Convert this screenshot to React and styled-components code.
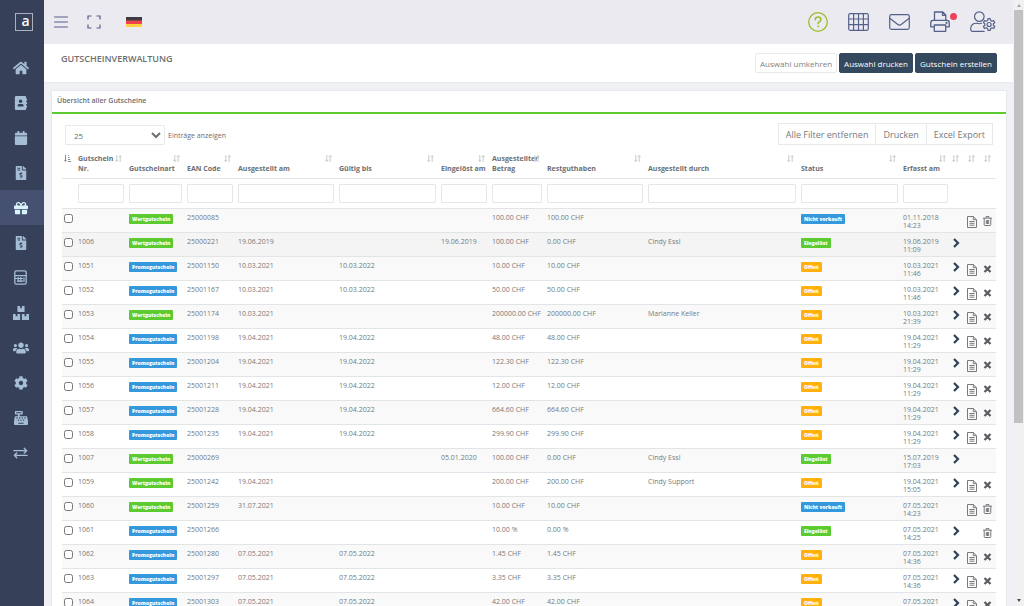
import React from 'react'
import styled, { createGlobalStyle } from 'styled-components'
import {
  FaHome,
  FaAddressBook,
  FaCalendar,
  FaFileInvoiceDollar,
  FaGift,
  FaBoxes,
  FaUsers,
  FaCog,
  FaCashRegister,
} from 'react-icons/fa'

const columns = [
  { label: '', width: 14 },
  { label: 'Gutschein Nr.', width: 51, filter: true },
  { label: 'Gutscheinart', width: 58, filter: true },
  { label: 'EAN Code', width: 51, filter: true },
  { label: 'Ausgestellt am', width: 101, filter: true },
  { label: 'Gültig bis', width: 102, filter: true },
  { label: 'Eingelöst am', width: 51, filter: true },
  { label: 'Ausgestellter Betrag', width: 55, filter: true },
  { label: 'Restguthaben', width: 101, filter: true },
  { label: 'Ausgestellt durch', filter: true },
  { label: 'Status', width: 102, filter: true },
  { label: 'Erfasst am', width: 50, filter: true },
  { label: '', width: 13 },
  { label: '', width: 16 },
  { label: '', width: 16 },
]

// nr, type, ean, issued, valid until, redeemed, amount, rest, issued by, status, date, time, actions
const rows = [
  ['', 'W', '25000085', '', '', '', '100.00 CHF', '100.00 CHF', '', 'N', '01.11.2018', '14:23', 'dt'],
  ['1006', 'W', '25000221', '19.06.2019', '', '19.06.2019', '100.00 CHF', '0.00 CHF', 'Cindy Essl', 'E', '19.06.2019', '11:09', 'c'],
  ['1051', 'P', '25001150', '10.03.2021', '10.03.2022', '', '10.00 CHF', '10.00 CHF', '', 'O', '10.03.2021', '11:46', 'cdx'],
  ['1052', 'P', '25001167', '10.03.2021', '10.03.2022', '', '50.00 CHF', '50.00 CHF', '', 'O', '10.03.2021', '11:46', 'cdx'],
  ['1053', 'W', '25001174', '10.03.2021', '', '', '200000.00 CHF', '200000.00 CHF', 'Marianne Keller', 'O', '10.03.2021', '21:39', 'cdx'],
  ['1054', 'P', '25001198', '19.04.2021', '19.04.2022', '', '48.00 CHF', '48.00 CHF', '', 'O', '19.04.2021', '11:29', 'cdx'],
  ['1055', 'P', '25001204', '19.04.2021', '19.04.2022', '', '122.30 CHF', '122.30 CHF', '', 'O', '19.04.2021', '11:29', 'cdx'],
  ['1056', 'P', '25001211', '19.04.2021', '19.04.2022', '', '12.00 CHF', '12.00 CHF', '', 'O', '19.04.2021', '11:29', 'cdx'],
  ['1057', 'P', '25001228', '19.04.2021', '19.04.2022', '', '664.60 CHF', '664.60 CHF', '', 'O', '19.04.2021', '11:29', 'cdx'],
  ['1058', 'P', '25001235', '19.04.2021', '19.04.2022', '', '299.90 CHF', '299.90 CHF', '', 'O', '19.04.2021', '11:29', 'cdx'],
  ['1007', 'W', '25000269', '', '', '05.01.2020', '100.00 CHF', '0.00 CHF', 'Cindy Essl', 'E', '15.07.2019', '17:03', 'c'],
  ['1059', 'W', '25001242', '19.04.2021', '', '', '200.00 CHF', '200.00 CHF', 'Cindy Support', 'O', '19.04.2021', '15:05', 'cdx'],
  ['1060', 'W', '25001259', '31.07.2021', '', '', '10.00 CHF', '10.00 CHF', '', 'N', '07.05.2021', '14:23', 'dt'],
  ['1061', 'P', '25001266', '', '', '', '10.00 %', '0.00 %', '', 'E', '07.05.2021', '14:25', 'ct'],
  ['1062', 'P', '25001280', '07.05.2021', '07.05.2022', '', '1.45 CHF', '1.45 CHF', '', 'O', '07.05.2021', '14:36', 'cdx'],
  ['1063', 'P', '25001297', '07.05.2021', '07.05.2022', '', '3.35 CHF', '3.35 CHF', '', 'O', '07.05.2021', '14:36', 'cdx'],
  ['1064', 'P', '25001303', '07.05.2021', '07.05.2022', '', '42.00 CHF', '42.00 CHF', '', 'O', '07.05.2021', '14:36', 'cdx'],
]

const types = {
  W: { label: 'Wertgutschein', color: '#5bcb2f' },
  P: { label: 'Promogutschein', color: '#3598dc' },
}

const states = {
  N: { label: 'Nicht verkauft', color: '#3598dc' },
  E: { label: 'Eingelöst', color: '#5bcb2f' },
  O: { label: 'Offen', color: '#ffb20d' },
}

const CalculatorIcon = () => (
  <svg viewBox="0 0 13 15" width="13" height="15" fill="none" stroke="currentColor" strokeWidth="1.300">
    <rect x=".8" y=".8" width="11.400" height="13.400" rx="1.500" />
    <path d="M1 5.600h11M1 8.500h8M4.200 7v5M6.800 7v5M3 11.200h6M10 7.500v4.500" strokeWidth="1.200" />
  </svg>
)

const ExchangeIcon = () => (
  <svg viewBox="0 0 16 12" width="15" height="12" fill="none" stroke="currentColor" strokeWidth="1.5" strokeLinecap="round" strokeLinejoin="round">
    <path d="M1 3.5h13.5M12 1l2.5 2.5L12 6M15 8.5H1.5M4 6L1.5 8.5L4 11" />
  </svg>
)

const navItems = [
  { name: 'Start', icon: <FaHome size={16} /> },
  { name: 'Kontakte', icon: <FaAddressBook size={14} /> },
  { name: 'Kalender', icon: <FaCalendar size={14} /> },
  { name: 'Rechnungen', icon: <FaFileInvoiceDollar size={14} /> },
  { name: 'Gutscheine', icon: <FaGift size={14} />, active: true },
  { name: 'Belege', icon: <FaFileInvoiceDollar size={14} /> },
  { name: 'Rechner', icon: <CalculatorIcon /> },
  { name: 'Lager', icon: <FaBoxes size={16} /> },
  { name: 'Personal', icon: <FaUsers size={16} /> },
  { name: 'Einstellungen', icon: <FaCog size={14} /> },
  { name: 'Kasse', icon: <FaCashRegister size={14} /> },
  { name: 'Transfer', icon: <ExchangeIcon /> },
]

const MenuIcon = () => (
  <svg width="14" height="12" viewBox="0 0 14 12" stroke="currentColor" strokeWidth="1" strokeLinecap="round">
    <path d="M.5 1h13M.5 6h13M.5 11h13" />
  </svg>
)

const ExpandIcon = () => (
  <svg width="14" height="14" viewBox="0 0 14 14" fill="none" stroke="currentColor" strokeWidth="1.2">
    <path d="M1 4.5V1h3.5M9.500 1H13v3.500M13 9.500V13H9.500M4.500 13H1V9.500" />
  </svg>
)

const FlagIcon = () => (
  <svg width="16" height="10" viewBox="0 0 16 10">
    <rect width="16" height="4" fill="#3d3a42" />
    <rect y="3.500" width="16" height="3.500" fill="#f0444c" />
    <rect y="7" width="16" height="3" fill="#ffd13f" />
  </svg>
)

const HelpIcon = () => (
  <svg width="20" height="20" viewBox="0 0 20 20" fill="none" stroke="#9cbf2e" strokeLinecap="round">
    <circle cx="10" cy="10" r="9.300" strokeWidth="1.300" />
    <path d="M7.200 7.700C7.300 6 8.500 5 10.100 5c1.600 0 2.800 1 2.800 2.500 0 2.200-2.800 2.200-2.800 4.300" strokeWidth="1.500" />
    <circle cx="10.100" cy="14.400" r=".5" fill="#9cbf2e" />
  </svg>
)

const GridIcon = () => (
  <svg width="21" height="18" viewBox="0 0 21 18" fill="none" stroke="currentColor" strokeWidth="1.200">
    <rect x=".7" y=".7" width="19.600" height="16.600" rx="1.500" />
    <path d="M.7 6h19.600M.7 11.700h19.600M5.600.7v16.600M10.500.7v16.600M15.400.7v16.600" />
  </svg>
)

const MailIcon = () => (
  <svg width="21" height="16" viewBox="0 0 21 16" fill="none" stroke="currentColor" strokeWidth="1.200" strokeLinejoin="round">
    <rect x=".7" y=".7" width="19.600" height="14.600" rx="1.800" />
    <path d="M.8 4.300l7.700 6c1.300 1 2.700 1 4 0l7.700-6" />
  </svg>
)

const PrinterIcon = () => (
  <svg width="20" height="21" viewBox="0 0 20 21" fill="none" stroke="currentColor" strokeWidth="1.300" strokeLinejoin="round">
    <path d="M4.500 9.300V1h8.300l3 3v5.300M12.500 1v3.300h3.300" />
    <path d="M4.300 15.800H.8v-4.300c0-1.300.9-2.200 2.200-2.200h14c1.300 0 2.200.9 2.200 2.200v4.300h-3.500" />
    <path d="M4.300 14h11.400v6.300H4.300z" />
    <circle cx="16.500" cy="11.900" r=".4" fill="currentColor" />
  </svg>
)

const UserGearIcon = () => (
  <svg width="26" height="21" viewBox="0 0 26 21" fill="none" stroke="currentColor" strokeWidth="1.200" strokeLinejoin="round" strokeLinecap="round">
    <circle cx="9.300" cy="5.600" r="4.800" />
    <path d="M11.500 12.300c-1.600.6-3 .6-4.500 0C3.200 12 .7 14.200.7 17.500v1.100c0 1 .7 1.700 1.700 1.700h11.800" />
    <path d="M18 7.600h2.200l.4 1.800 1.300.8 1.800-.6 1.100 1.900-1.400 1.200v1.600l1.400 1.200-1.100 1.900-1.800-.6-1.300.8-.4 1.800H18l-.4-1.800-1.300-.8-1.800.6-1.100-1.900 1.400-1.200v-1.600l-1.400-1.200 1.100-1.900 1.800.6 1.300-.8z" />
    <circle cx="19.100" cy="13.500" r="2" />
  </svg>
)

const SortIcon = () => (
  <svg width="7" height="7" viewBox="0 0 7 7" fill="none" stroke="#c9cacc" strokeWidth="1">
    <path d="M1.800 0v6.300M.3 4.800l1.500 1.700 1.500-1.700M5.200 7V.7M3.700 2.200L5.200.5l1.500 1.700" />
  </svg>
)

const SortActiveIcon = () => (
  <svg width="7" height="7" viewBox="0 0 7 7" fill="none" stroke="#8a8c90" strokeWidth="1">
    <path d="M1.500 0v6.300M.2 4.800l1.300 1.500 1.300-1.500M4 .5h1M4 2.500h1.500M4 4.500h2.300M4 6.500h3" />
  </svg>
)

const ChevronIcon = () => (
  <svg width="7" height="10" viewBox="0 0 7 10" fill="none" stroke="#2f4058" strokeWidth="2.200">
    <path d="M1 1l4 4-4 4" />
  </svg>
)

const DocIcon = () => (
  <svg width="10" height="12" viewBox="0 0 10 12" fill="none" stroke="#77797c" strokeWidth="1">
    <path d="M.5.5h5.800l3.200 3.200v7.800h-9zM6.300.5v3.200h3.200M2.500 5.500h5M2.500 7.300h5M2.500 9.200h5" />
  </svg>
)

const TrashIcon = () => (
  <svg width="9" height="10" viewBox="0 0 9 10" fill="none" stroke="#77797c" strokeWidth="1">
    <path d="M0 2.200h9M3 2V.6h3V2M1.200 2.200v6.500c0 .5.300.8.800.8h5c.5 0 .8-.3.800-.8V2.200M3.300 4v4M4.500 4v4M5.700 4v4" />
  </svg>
)

const CrossIcon = () => (
  <svg width="9" height="10" viewBox="0 0 9 10" stroke="#5b5d60" strokeWidth="2.300">
    <path d="M1.500 2l6 6M7.500 2l-6 6" />
  </svg>
)

const App = () => {
  return (
    <Shell>
      <GlobalStyle />
      <Sidebar>
        <Brand href="#" aria-label="Startseite">
          <Logo>a</Logo>
        </Brand>
        {navItems.map((item) => (
          <NavLink key={item.name} href="#" aria-label={item.name} $active={item.active}>
            {item.icon}
          </NavLink>
        ))}
      </Sidebar>

      <Main>
        <TopBar>
          <TopGroup $gap={19}>
            <IconButton aria-label="Menü"><MenuIcon /></IconButton>
            <IconButton aria-label="Vollbild"><ExpandIcon /></IconButton>
            <FlagButton aria-label="Deutsch"><FlagIcon /></FlagButton>
          </TopGroup>
          <TopGroup $gap={20}>
            <IconButton aria-label="Hilfe"><HelpIcon /></IconButton>
            <IconButton aria-label="Tabellen"><GridIcon /></IconButton>
            <IconButton aria-label="Nachrichten"><MailIcon /></IconButton>
            <IconButton aria-label="Drucker"><PrinterIcon /><Dot /></IconButton>
            <IconButton aria-label="Benutzer"><UserGearIcon /></IconButton>
          </TopGroup>
        </TopBar>

        <TitleBar>
          <Title>GUTSCHEINVERWALTUNG</Title>
          <Actions>
            <Button>Auswahl umkehren</Button>
            <Button $dark>Auswahl drucken</Button>
            <Button $dark>Gutschein erstellen</Button>
          </Actions>
        </TitleBar>

        <Card>
          <CardTitle>Übersicht aller Gutscheine</CardTitle>
          <CardBody>
            <Toolbar>
              <Length>
                <Select defaultValue="25">
                  <option>10</option>
                  <option>25</option>
                  <option>50</option>
                </Select>
                Einträge anzeigen
              </Length>
              <ButtonGroup>
                <GroupButton>Alle Filter entfernen</GroupButton>
                <GroupButton>Drucken</GroupButton>
                <GroupButton>Excel Export</GroupButton>
              </ButtonGroup>
            </Toolbar>

            <Table>
              <colgroup>
                {columns.map((col, i) => (
                  <Col key={i} $width={col.width} />
                ))}
              </colgroup>
              <thead>
                <tr>
                  {columns.map((col, i) => (
                    <HeadCell key={i}>
                      {col.label}
                      <Sort>{i === 0 ? <SortActiveIcon /> : <SortIcon />}</Sort>
                    </HeadCell>
                  ))}
                </tr>
                <tr>
                  {columns.map((col, i) => (
                    <FilterCell key={i}>
                      {col.filter && <FilterInput aria-label={col.label} />}
                    </FilterCell>
                  ))}
                </tr>
              </thead>
              <tbody>
                {rows.map((row, i) => (
                  <Row key={row[2]} $marked={i === 1}>
                    <Cell><Checkbox type="checkbox" aria-label={row[2]} /></Cell>
                    <Cell>{row[0]}</Cell>
                    <Cell><Badge $color={types[row[1]].color}>{types[row[1]].label}</Badge></Cell>
                    {row.slice(2, 9).map((value, j) => (
                      <Cell key={j}>{value}</Cell>
                    ))}
                    <Cell><Badge $color={states[row[9]].color}>{states[row[9]].label}</Badge></Cell>
                    <Cell>{row[10]}<br />{row[11]}</Cell>
                    <Cell>
                      {row[12].includes('c') && <RowButton aria-label="Öffnen"><ChevronIcon /></RowButton>}
                    </Cell>
                    <Cell>
                      {row[12].includes('d') && <RowButton $low aria-label="Beleg"><DocIcon /></RowButton>}
                    </Cell>
                    <Cell>
                      {row[12].includes('t') && <RowButton $low aria-label="Löschen"><TrashIcon /></RowButton>}
                      {row[12].includes('x') && <RowButton $low aria-label="Stornieren"><CrossIcon /></RowButton>}
                    </Cell>
                  </Row>
                ))}
              </tbody>
            </Table>
          </CardBody>
        </Card>
      </Main>

      <Scrollbar>
        <Arrow $up />
        <Thumb />
        <Arrow />
      </Scrollbar>
    </Shell>
  )
}

export default App

const GlobalStyle = createGlobalStyle`
* {
  box-sizing: border-box;
}
body {
  margin: 0;
  background: #eff1f5;
  color: #6c6e72;
  font-family: "Open Sans", "Liberation Sans", sans-serif;
  font-size: 7px;
}
button, input, select {
  font-family: inherit;
  color: inherit;
}
svg {
  display: block;
}
`;
const Shell = styled.div`
  display: grid;
  grid-template-columns: 44px minmax(0, 1fr) 11px;
  height: 100vh;
  overflow: hidden;
`;
const Sidebar = styled.nav`
  display: flex;
  flex-direction: column;
  background: #364059;
`;
const Brand = styled.a`
  display: flex;
  justify-content: center;
  align-items: center;
  height: 44px;
  margin-bottom: 6px;
  padding-left: 3px;
  text-decoration: none;
`;
const Logo = styled.span`
  display: flex;
  align-items: center;
  justify-content: flex-end;
  width: 18px;
  height: 18px;
  padding: 0 2px 3px 0;
  border: 1px solid #aab0bd;
  color: #fff;
  font-size: 14px;
  line-height: 14px;
  font-weight: 600;
`;
const NavLink = styled.a`
  display: flex;
  align-items: center;
  justify-content: center;
  height: 35px;
  padding-right: 3px;
  background: ${(p) => (p.$active ? '#465172' : 'transparent')};
  color: ${(p) => (p.$active ? '#d9f3fb' : '#a6bdd6')};
`;
const Main = styled.main`
  min-width: 0;
  overflow: hidden;
`;
const TopBar = styled.header`
  display: flex;
  align-items: center;
  justify-content: space-between;
  height: 44px;
  padding: 0 17px 1px 10px;
  background: #eaeaf0;
`;
const TopGroup = styled.div`
  display: flex;
  align-items: center;
  gap: ${(p) => p.$gap}px;
`;
const IconButton = styled.button`
  position: relative;
  padding: 0;
  border: 0;
  background: none;
  color: #56618a;
`;
const FlagButton = styled(IconButton)`
  margin-left: 6px;
`;
const Dot = styled.span`
  position: absolute;
  top: 2px;
  right: -7px;
  width: 7px;
  height: 7px;
  border-radius: 50%;
  background: #f0405a;
`;
const TitleBar = styled.div`
  display: flex;
  justify-content: space-between;
  padding: 9px 16px 9px 17px;
  border-bottom: 1px solid #e7e9ee;
  background: #fff;
`;
const Title = styled.h1`
  margin: 0;
  font-size: 9px;
  line-height: 12px;
  font-weight: 600;
`;
const Actions = styled.div`
  display: flex;
  gap: 2px;
`;
const Button = styled.button`
  height: 20px;
  padding: 0 4px;
  border: 1px solid ${(p) => (p.$dark ? '#34495e' : '#e7eaec')};
  border-radius: 2px;
  background: ${(p) => (p.$dark ? '#34495e' : '#fff')};
  color: ${(p) => (p.$dark ? '#fff' : '#7d7f83')};
  font-size: 8px;
`;
const Card = styled.section`
  margin: 7px 6px 0 7px;
  border: 1px solid #e7eaec;
  background: #fff;
`;
const CardTitle = styled.h2`
  margin: 0;
  padding: 5px 5px 6px;
  border-bottom: 2px solid #5bcb2f;
  font-size: 7px;
  line-height: 10px;
  font-weight: 600;
`;
const CardBody = styled.div`
  padding: 9px 10px 0;
`;
const Toolbar = styled.div`
  display: flex;
  justify-content: space-between;
  padding: 0 3px;
`;
const Length = styled.label`
  display: flex;
  align-items: center;
  gap: 3px;
  height: 24px;
`;
const Select = styled.select`
  width: 100px;
  height: 20px;
  padding: 0 0 0 4px;
  border: 1px solid #e7eaec;
  border-radius: 1px;
  background: #fff;
  font-size: 8px;
`;
const ButtonGroup = styled.div`
  display: flex;
  height: 22px;
`;
const GroupButton = styled.button`
  padding: 0 7px;
  border: 1px solid #e7eaec;
  background: #fff;
  color: #77797d;
  font-size: 9px;

  & + & {
    border-left: 0;
  }
`;
const Table = styled.table`
  width: 100%;
  margin-top: 4px;
  table-layout: fixed;
  border-collapse: collapse;
`;
const Col = styled.col`
  width: ${(p) => (p.$width ? p.$width + 'px' : 'auto')};
`;
const HeadCell = styled.th`
  position: relative;
  height: 27px;
  padding: 0 2px 4px;
  border-bottom: 1px solid #e3e4e6;
  font-size: 7px;
  line-height: 10px;
  font-weight: 700;
  text-align: left;
  vertical-align: bottom;
`;
const Sort = styled.span`
  position: absolute;
  top: 4px;
  right: 5px;
`;
const FilterCell = styled.td`
  height: 29px;
  padding: 5px 3px 5px 2px;
`;
const FilterInput = styled.input`
  display: block;
  width: 100%;
  height: 19px;
  padding: 0 3px;
  border: 1px solid #e5e6e7;
  border-radius: 1px;
  background: #fff;
  font-size: 7px;
`;
const Row = styled.tr`
  background: #fff;

  &:nth-child(odd) {
    background: #f9f9f9;
  }
  ${(p) => p.$marked && 'background: #f4f4f4;'}
`;
const Cell = styled.td`
  height: 24px;
  padding: 5px 0 2px 2px;
  border-top: 1px solid #e3e4e6;
  color: #77797d;
  font-size: 7px;
  line-height: 8px;
  white-space: nowrap;
  vertical-align: top;
`;
const Checkbox = styled.input`
  display: block;
  width: 9px;
  height: 9px;
  margin: 0;
`;
const Badge = styled.span`
  display: block;
  width: fit-content;
  padding: 0 3px;
  border-radius: 1px;
  background: ${(p) => p.$color};
  color: #fff;
  font-size: 5px;
  line-height: 10px;
  font-weight: 800;
`;
const RowButton = styled.button`
  display: block;
  margin: ${(p) => (p.$low ? '2px 0 0 1px' : '0')};
  padding: 0;
  border: 0;
  background: none;
`;
const Scrollbar = styled.div`
  display: flex;
  flex-direction: column;
  align-items: center;
  gap: 3px;
  padding: 4px 0;
  background: #f1f1f1;
`;
const Thumb = styled.div`
  flex: 0 0 69%;
  width: 9px;
  margin-bottom: auto;
  background: #c1c1c1;
`;
const Arrow = styled.span`
  border: 2px solid transparent;
  border-top: ${(p) => (p.$up ? '0' : '3px solid #505050')};
  border-bottom: ${(p) => (p.$up ? '3px solid #a3a3a3' : '0')};
`;
